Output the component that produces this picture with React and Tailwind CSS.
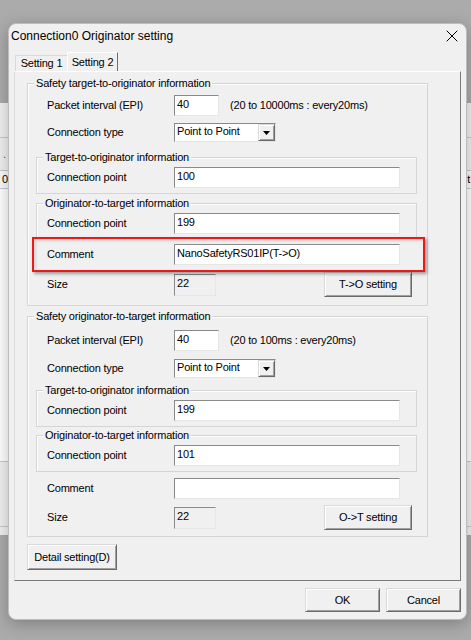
import React from 'react';
import { X } from 'lucide-react';

const sunken = 'border border-t-[#8a8a8a] border-l-[#8a8a8a] border-r-[#e6e6e6] border-b-[#e6e6e6]';
const raised =
  'border border-t-[#dadada] border-l-[#dadada] border-r-[#6a6a6a] border-b-[#6a6a6a] bg-[#f0f0f0] shadow-[inset_1px_1px_0_#ffffff,inset_-1px_-1px_0_#a0a0a0]';

const TextBox = ({ value = '', width, height = 'h-[21px]', disabled, className = '' }) => (
  <div
    className={`${width} ${height} ${sunken} ${disabled ? 'bg-[#f0f0f0]' : 'bg-white'} shrink-0 pl-[2px] pt-[1px] leading-[15px] ${className}`}
  >
    {value}
  </div>
);

const Select = () => (
  <div className={`flex h-[19px] w-[102px] bg-white ${sunken}`}>
    <span className="flex-1 pl-[2px] leading-[15px]">Point to Point</span>
    <div className={`flex w-[17px] items-center justify-center ${raised}`}>
      <svg width="7" height="4" viewBox="0 0 7 4">
        <path d="M0 0h7L3.5 4z" fill="#000" />
      </svg>
    </div>
  </div>
);

const Button = ({ children, className = '' }) => (
  <button className={`flex items-center justify-center ${raised} ${className}`}>{children}</button>
);

const Group = ({ title, className = '', children }) => (
  <div className={`relative border border-[#d5d5d5] shadow-[inset_1px_1px_0_#ffffff] ${className}`}>
    <span className="absolute left-[6px] top-[-8px] bg-[#f0f0f0] px-[2px] leading-[14px]">{title}</span>
    {children}
  </div>
);

const Row = ({ label, className = '', children }) => (
  <div className={`flex items-center ${className}`}>
    <span className="w-[127px] shrink-0">{label}</span>
    {children}
  </div>
);

const PointGroup = ({ title, value, className }) => (
  <Group title={title} className={`ml-[8px] mr-[10px] pb-[5px] pt-[9px] ${className}`}>
    <Row label="Connection point" className="h-[21px] pl-[10px]">
      <TextBox value={value} width="w-[226px]" />
    </Row>
  </Group>
);

export default function App() {
  return (
    <div className="relative h-[640px] w-[471px] overflow-hidden bg-[#ababab] font-['Liberation_Sans',Arial,sans-serif] text-[11px] tracking-[-0.2px] text-black">
      {/* window behind the dialog */}
      <div className="absolute left-0 right-0 top-[103px] flex h-[432px] flex-col bg-[#f0f0f0]">
        <div className="h-[35px] border-b border-[#c8c8c8]" />
        <div className="flex h-[33px] items-center border-b border-[#c8c8c8] pl-[3px] text-[#555]">.</div>
        <div className="flex h-[18px] items-center justify-between border-b border-[#c8c8c8] bg-[#fafafa] pl-[2px] pr-[1px]">
          <span>0</span>
          <span>t</span>
        </div>
        <div className="h-[273px] border-b border-[#c8c8c8] bg-white" />
        <div className="h-[65px] border-b border-[#c8c8c8]" />
      </div>

      {/* dialog */}
      <div className="absolute left-[8px] top-[23px] flex h-[597px] w-[459px] flex-col rounded-[8px] border border-[#bdbdbd] bg-[#f0f0f0] shadow-[0_4px_16px_rgba(0,0,0,0.25)]">
        <div className="flex h-[23px] items-center justify-between pl-[2px] pr-[4px]">
          <span className="text-[12px] tracking-normal">Connection0 Originator setting</span>
          <X size={20} strokeWidth={1.2} />
        </div>

        <div className="ml-[6px] mt-[5px] flex h-[19px] items-end">
          <div className="flex h-[16px] w-[52px] items-center justify-center border-l border-t border-[#d9d9d9]">
            Setting 1
          </div>
          <div className="flex h-[19px] w-[51px] items-center justify-center border-l border-r border-t border-l-white border-t-white border-r-[#6e6e6e]">
            Setting 2
          </div>
        </div>

        <div className="ml-[5px] flex h-[510px] w-[447px] flex-col border border-l-[#dcdcdc] border-t-white border-r-[#7a7a7a] border-b-[#7a7a7a] pl-[12px] pt-[11px]">
          <Group title="Safety target-to-originator information" className="w-[401px] pb-[8px]">
            <Row label="Packet interval (EPI)" className="mt-[11px] h-[21px] pl-[19px]">
              <TextBox value="40" width="w-[45px]" />
              <span className="ml-[11px]">(20 to 10000ms : every20ms)</span>
            </Row>
            <Row label="Connection type" className="mt-[7px] h-[19px] pl-[19px]">
              <Select />
            </Row>
            <PointGroup title="Target-to-originator information" value="100" className="mt-[15px]" />
            <PointGroup title="Originator-to-target information" value="199" className="mt-[9px]" />
            <div className="relative ml-[4px] mr-[2px] -mt-[3px] h-[35px] border-2 border-[#ea1a1a] bg-[#f0f0f0] pl-[13px] pt-[5px] shadow-[2px_2px_3px_rgba(0,0,0,0.35),inset_2px_2px_3px_rgba(0,0,0,0.12)]">
              <Row label="Comment" className="h-[21px]">
                <TextBox value="NanoSafetyRS01IP(T->O)" width="w-[226px]" />
              </Row>
            </div>
            <div className="flex h-[25px] items-center pl-[19px] pr-[15px]">
              <span className="w-[127px] shrink-0">Size</span>
              <TextBox value="22" width="w-[42px]" height="h-[22px]" disabled />
              <Button className="ml-auto h-[25px] w-[88px]">T-&gt;O setting</Button>
            </div>
          </Group>

          <Group title="Safety originator-to-target information" className="mt-[10px] w-[401px] pb-[6px]">
            <Row label="Packet interval (EPI)" className="mt-[13px] h-[21px] pl-[19px]">
              <TextBox value="40" width="w-[45px]" />
              <span className="ml-[11px]">(20 to 100ms : every20ms)</span>
            </Row>
            <Row label="Connection type" className="mt-[8px] h-[19px] pl-[19px]">
              <Select />
            </Row>
            <PointGroup title="Target-to-originator information" value="199" className="mt-[12px]" />
            <PointGroup title="Originator-to-target information" value="101" className="mt-[8px]" />
            <Row label="Comment" className="mt-[6px] h-[21px] pl-[19px]">
              <TextBox width="w-[226px]" />
            </Row>
            <div className="mt-[6px] flex h-[25px] items-center pl-[19px] pr-[15px]">
              <span className="w-[127px] shrink-0">Size</span>
              <TextBox value="22" width="w-[42px]" height="h-[22px]" disabled />
              <Button className="ml-auto h-[25px] w-[88px]">O-&gt;T setting</Button>
            </div>
          </Group>

          <Button className="mt-[7px] h-[26px] w-[90px]">Detail setting(D)</Button>
        </div>

        <div className="mt-[7px] flex justify-end gap-[6px] pr-[5px]">
          <Button className="h-[24px] w-[75px]">OK</Button>
          <Button className="h-[24px] w-[75px]">Cancel</Button>
        </div>
      </div>
    </div>
  );
}
